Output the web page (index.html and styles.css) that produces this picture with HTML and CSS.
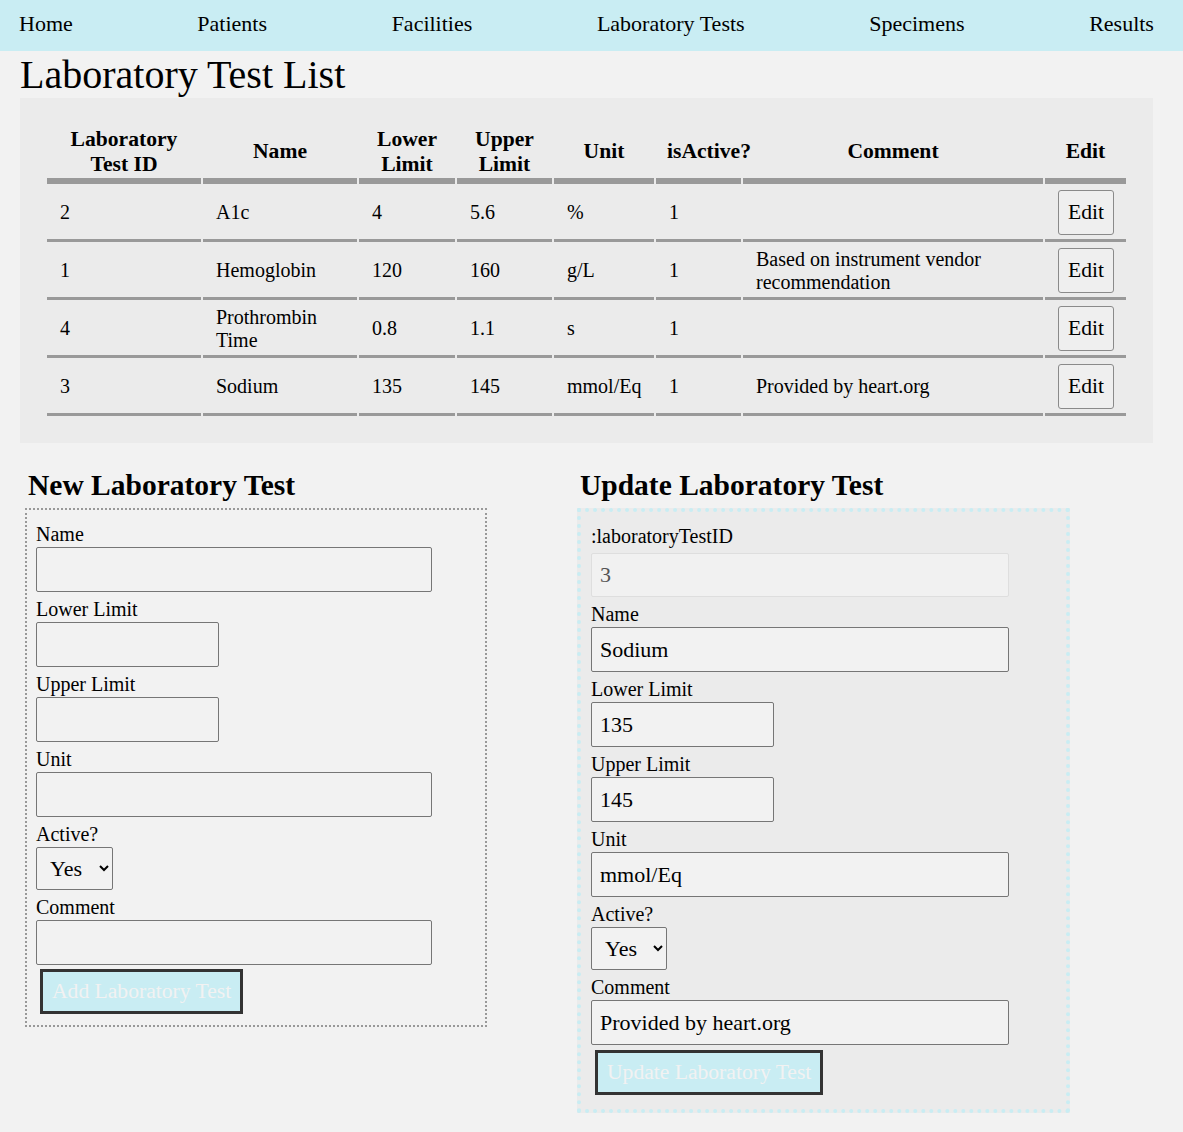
FILE: index.html
```html
<!DOCTYPE html>
<html lang="en">
<head>
<meta charset="utf-8">
<title>Laboratory Test List</title>
<link rel="stylesheet" href="styles.css">
</head>
<body>
<nav class="topnav">
  <a href="#">Home</a>
  <a href="#">Patients</a>
  <a href="#">Facilities</a>
  <a href="#">Laboratory Tests</a>
  <a href="#">Specimens</a>
  <a href="#">Results</a>
</nav>

<h1 class="page-title">Laboratory Test List</h1>

<section class="list-panel">
  <table class="lab-table">
    <colgroup>
      <col class="c-id"><col class="c-name"><col class="c-lower"><col class="c-upper">
      <col class="c-unit"><col class="c-active"><col class="c-comment"><col class="c-edit">
    </colgroup>
    <thead>
      <tr>
        <th>Laboratory Test ID</th>
        <th>Name</th>
        <th>Lower Limit</th>
        <th>Upper Limit</th>
        <th>Unit</th>
        <th>isActive?</th>
        <th>Comment</th>
        <th>Edit</th>
      </tr>
    </thead>
    <tbody>
      <tr>
        <td>2</td><td>A1c</td><td>4</td><td>5.6</td><td>%</td><td>1</td><td></td>
        <td><button class="edit-btn" type="button">Edit</button></td>
      </tr>
      <tr>
        <td>1</td><td>Hemoglobin</td><td>120</td><td>160</td><td>g/L</td><td>1</td><td>Based on instrument vendor recommendation</td>
        <td><button class="edit-btn" type="button">Edit</button></td>
      </tr>
      <tr>
        <td>4</td><td>Prothrombin Time</td><td>0.8</td><td>1.1</td><td>s</td><td>1</td><td></td>
        <td><button class="edit-btn" type="button">Edit</button></td>
      </tr>
      <tr>
        <td>3</td><td>Sodium</td><td>135</td><td>145</td><td>mmol/Eq</td><td>1</td><td>Provided by heart.org</td>
        <td><button class="edit-btn" type="button">Edit</button></td>
      </tr>
    </tbody>
  </table>
</section>

<div class="forms">
  <section class="form-col">
    <h2 class="form-title">New Laboratory Test</h2>
    <form class="lab-form new-form">
      <label class="field-label">Name</label>
      <input class="field-input new-wide" type="text">
      <label class="field-label">Lower Limit</label>
      <input class="field-input narrow" type="text">
      <label class="field-label">Upper Limit</label>
      <input class="field-input narrow" type="text">
      <label class="field-label">Unit</label>
      <input class="field-input new-wide" type="text">
      <label class="field-label">Active?</label>
      <select class="field-select new-select"><option>Yes</option><option>No</option></select>
      <label class="field-label">Comment</label>
      <input class="field-input new-wide" type="text">
      <button class="submit-btn new-submit" type="button">Add Laboratory Test</button>
    </form>
  </section>

  <section class="form-col">
    <h2 class="form-title">Update Laboratory Test</h2>
    <form class="lab-form update-form">
      <label class="field-label">:laboratoryTestID</label>
      <input class="field-input upd-wide id-input" type="text" value="3" disabled>
      <label class="field-label">Name</label>
      <input class="field-input upd-wide" type="text" value="Sodium">
      <label class="field-label">Lower Limit</label>
      <input class="field-input narrow" type="text" value="135">
      <label class="field-label">Upper Limit</label>
      <input class="field-input narrow" type="text" value="145">
      <label class="field-label">Unit</label>
      <input class="field-input upd-wide" type="text" value="mmol/Eq">
      <label class="field-label">Active?</label>
      <select class="field-select upd-select"><option>Yes</option><option>No</option></select>
      <label class="field-label">Comment</label>
      <input class="field-input upd-wide" type="text" value="Provided by heart.org">
      <button class="submit-btn" type="button">Update Laboratory Test</button>
    </form>
  </section>
</div>
</body>
</html>
```

FILE: styles.css
```css
body {
  margin: 0;
  background: #f2f2f2;
  font-family: "Liberation Serif", "Times New Roman", serif;
  font-size: 20px;
  color: #000;
}

.topnav {
  display: flex;
  justify-content: space-between;
  align-items: flex-start;
  height: 51px;
  box-sizing: border-box;
  padding: 11px 29px 0 19px;
  background: #c9edf3;
}

.topnav a {
  color: #000;
  text-decoration: none;
  font-size: 22px;
  line-height: 25px;
}

.page-title {
  font-size: 40px;
  font-weight: normal;
  line-height: 46px;
  margin: 1px 0 0 20px;
}

.list-panel {
  margin: 0 30px 0 20px;
  padding: 25px;
  background: #ebebeb;
}

.lab-table {
  width: 1083px;
  table-layout: fixed;
  border-collapse: separate;
  border-spacing: 2px;
}

.c-id { width: 154px; }
.c-name { width: 154px; }
.c-lower { width: 96px; }
.c-upper { width: 95px; }
.c-unit { width: 100px; }
.c-active { width: 85px; }
.c-comment { width: 300px; }
.c-edit { width: 81px; }

.lab-table th {
  font-size: 21.6px;
  line-height: 24.5px;
  font-weight: bold;
  padding: 2px 11px;
  border-bottom: 6px solid #999;
  text-align: center;
  vertical-align: middle;
}

.lab-table td {
  font-size: 20px;
  line-height: 22.5px;
  padding: 4px 13px;
  border-bottom: 3px solid #999;
  text-align: left;
  vertical-align: middle;
}

.edit-btn {
  display: block;
  box-sizing: border-box;
  height: 45px;
  padding: 9px 9px;
  font-family: "Liberation Serif", "Times New Roman", serif;
  font-size: 21.6px;
  line-height: 25px;
  color: #000;
  background: #efefef;
  border: 1px solid #8a8a8a;
  border-radius: 3px;
}

.forms {
  display: grid;
  grid-template-columns: 552px 552px;
  align-items: start;
  margin-left: 25px;
}

.form-title {
  font-size: 29.5px;
  font-weight: bold;
  line-height: 34px;
  margin: 25px 0 6px 3px;
}

.lab-form {
  box-sizing: border-box;
}

.new-form {
  width: 462px;
  border: 2px dotted #999;
  padding: 7px 10px 11px 9px;
}

.update-form {
  width: 493px;
  border: 4px dotted #c9edf3;
  background: #ebebeb;
  padding: 7px 10px 14px 10px;
}

.field-label {
  display: block;
  font-size: 20px;
  line-height: 24px;
  margin-top: 5px;
}

.field-input {
  display: block;
  box-sizing: border-box;
  height: 45px;
  margin: 1px 0 0 0;
  padding: 0 8px;
  border: 1px solid #767676;
  border-radius: 2px;
  background: #f2f2f2;
  font-family: "Liberation Serif", "Times New Roman", serif;
  font-size: 22px;
  color: #000;
}

.new-wide { width: 396px; }
.upd-wide { width: 418px; }
.narrow { width: 183px; }

.id-input {
  height: 44px;
  margin-top: 5px;
  border-color: #dedede;
  background: #f1f1f1;
  color: #545454;
}

.field-select {
  display: block;
  box-sizing: border-box;
  height: 43px;
  margin-top: 1px;
  padding: 0 0 0 9px;
  border: 1px solid #767676;
  border-radius: 2px;
  background: #f2f2f2;
  font-family: "Liberation Serif", "Times New Roman", serif;
  font-size: 22px;
  color: #000;
}

.new-select { width: 77px; }
.upd-select { width: 76px; }

.submit-btn {
  display: block;
  box-sizing: border-box;
  height: 45px;
  margin: 5px 0 0 4px;
  padding: 7px 9px;
  border: 3px solid #333;
  border-radius: 0;
  background: #c9edf3;
  color: #f2f2f2;
  font-family: "Liberation Serif", "Times New Roman", serif;
  font-size: 21.6px;
  line-height: 25px;
}

.new-submit {
  margin-top: 4px;
}
```
